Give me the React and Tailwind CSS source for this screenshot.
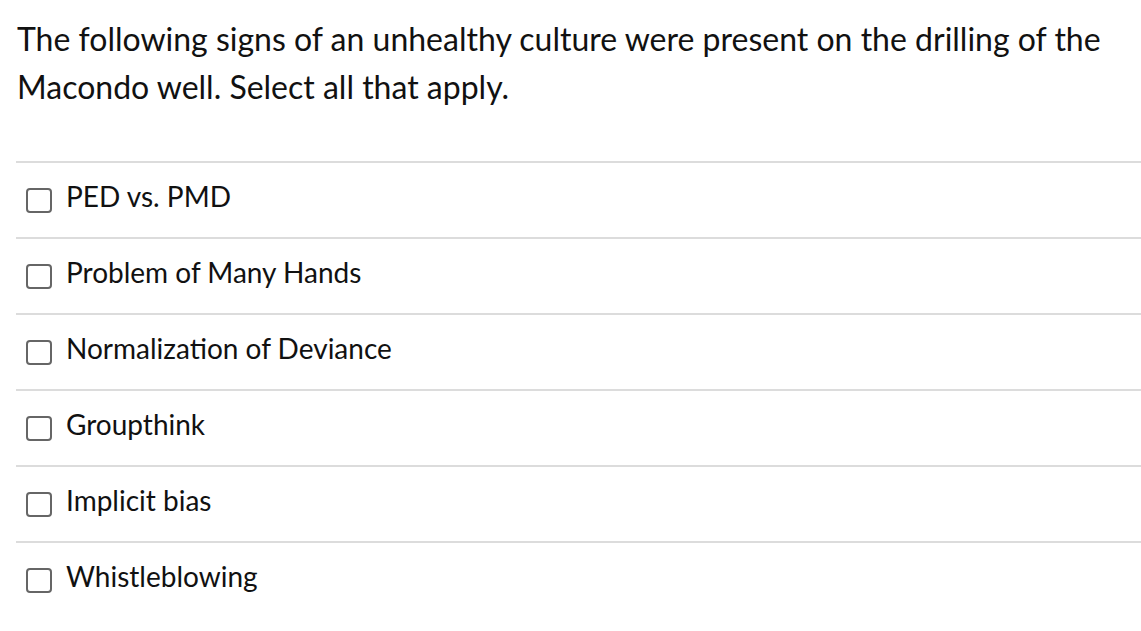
const options = [
  "PED vs. PMD",
  "Problem of Many Hands",
  "Normalization of Deviance",
  "Groupthink",
  "Implicit bias",
  "Whistleblowing",
]

export default function App() {
  return (
    <div className="w-[1141px] h-[631px] overflow-hidden bg-white text-[#111] font-['Lato',sans-serif]">
      <div className="pl-[17px] pt-[15px] text-[32px] leading-[48px]">
        The following signs of an unhealthy culture were present on the drilling of the Macondo well. Select all that apply.
      </div>
      <div className="mt-[50px] ml-[16px]">
        {options.map((opt) => (
          <label key={opt} className="flex items-center h-[76px] border-t-2 border-[#dcdcdc] pl-[10px]">
            <span className="w-[26px] h-[25px] border-2 border-[#666] rounded-[4px] shrink-0" />
            <span className="ml-[14px] text-[28px] leading-[32px] -mt-[9px]">{opt}</span>
          </label>
        ))}
      </div>
    </div>
  )
}
